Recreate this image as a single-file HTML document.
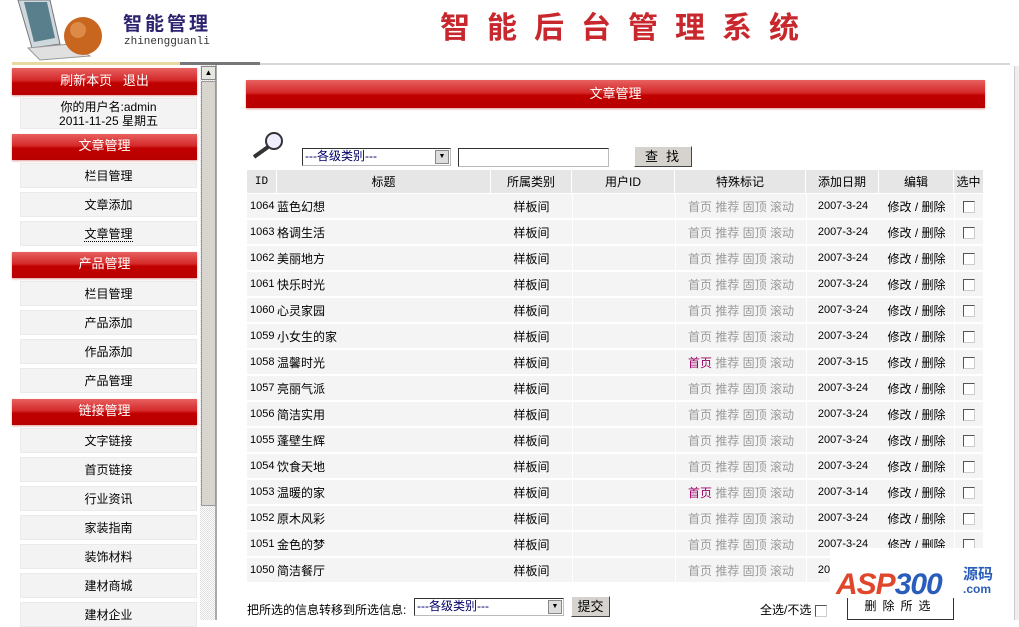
<!DOCTYPE html>
<html><head><meta charset="utf-8"><style>
*{margin:0;padding:0;box-sizing:border-box}
body{width:1019px;height:620px;overflow:hidden;background:#fff;font-family:"Liberation Sans","Noto Sans CJK SC","WenQuanYi Zen Hei",sans-serif;font-size:12px;color:#000;position:relative}
.a{position:absolute}
.red{background:linear-gradient(#e86060 0%,#d42a2a 45%,#c00000 55%,#b80000 100%);color:#fff;text-align:center;font-size:13px;box-shadow:0 1px 2px #d99}
.item{position:absolute;left:20px;width:177px;height:25px;background:#f3f3f3;border:1px solid #eaeaea;text-align:center;line-height:24px;font-size:12px}
table{border-collapse:separate;border-spacing:0 2px}
td{height:24px;background:#f4f4f4;font-size:12px;white-space:nowrap;padding:0}
th{height:23px;background:#e6e6e6;font-weight:normal;font-size:12px;border-right:1px solid #fff}
.g{color:#9a9a9a}
.cb{display:inline-block;width:12px;height:12px;border:1px solid #555;border-right-color:#ccc;border-bottom-color:#ccc;background:#fff;vertical-align:middle}
</style></head><body>
<!-- header -->
<svg class="a" style="left:10px;top:0" width="95" height="62">
<polygon points="8,0 40,0 50,44 22,48" fill="#cfd8dc" stroke="#777"/>
<polygon points="14,2 37,2 45,38 24,42" fill="#5a7f8c"/>
<polygon points="18,48 60,44 80,56 30,60" fill="#e0e0e0" stroke="#999"/>
<circle cx="73" cy="36" r="19" fill="#c8651f"/>
<circle cx="68" cy="30" r="8" fill="#e49a55" opacity=".7"/>
</svg>
<div class="a" style="left:123px;top:15px;font-size:19px;line-height:1;font-weight:bold;color:#2b2270;letter-spacing:3px">智能管理</div>
<div class="a" style="left:124px;top:37px;font-family:'Liberation Mono',monospace;font-size:11px;line-height:1;color:#333">zhinengguanli</div>
<div class="a" style="left:440px;top:12px;font-size:30px;line-height:1.1;font-weight:bold;color:#c8282d;letter-spacing:17px">智能后台管理系统</div>
<div class="a" style="left:12px;top:62px;width:168px;height:3px;background:#e8d9a0"></div>
<div class="a" style="left:180px;top:62px;width:80px;height:3px;background:#777"></div>
<div class="a" style="left:260px;top:63px;width:750px;height:2px;background:#d8d8d8"></div>
<div class="a" style="left:1014px;top:66px;width:5px;height:554px;background:#eee;border-left:1px solid #ccc"></div>
<!-- left scrollbar -->
<div class="a" style="left:200px;top:65px;width:17px;height:555px;background:repeating-conic-gradient(#ddd 0 25%,#fff 0 50%) 0 0/2px 2px;border-right:2px solid #aaa"></div>
<div class="a" style="left:201px;top:66px;width:15px;height:14px;background:#e8e6e0;border:1px solid #888;font-size:8px;text-align:center;line-height:12px">▲</div>
<div class="a" style="left:201px;top:81px;width:15px;height:425px;background:#d8d5ce;border:1px solid #999"></div>
<!-- left menu -->
<div class="a red" style="left:12px;top:68px;width:185px;height:27px;line-height:25px">刷新本页&nbsp;&nbsp;&nbsp;退出</div>
<div class="item" style="top:98px;height:31px;line-height:14px;padding-top:1px">你的用户名:admin<br>2011-11-25 星期五</div>
<div class="a red" style="left:12px;top:134px;width:185px;height:26px;line-height:24px">文章管理</div>
<div class="item" style="top:163px">栏目管理</div>
<div class="item" style="top:192px">文章添加</div>
<div class="item" style="top:221px"><span style="border-bottom:1px dotted #000">文章管理</span></div>
<div class="a red" style="left:12px;top:252px;width:185px;height:26px;line-height:24px">产品管理</div>
<div class="item" style="top:281px">栏目管理</div>
<div class="item" style="top:310px">产品添加</div>
<div class="item" style="top:339px">作品添加</div>
<div class="item" style="top:368px">产品管理</div>
<div class="a red" style="left:12px;top:399px;width:185px;height:26px;line-height:24px">链接管理</div>
<div class="item" style="top:428px">文字链接</div>
<div class="item" style="top:457px">首页链接</div>
<div class="item" style="top:486px">行业资讯</div>
<div class="item" style="top:515px">家装指南</div>
<div class="item" style="top:544px">装饰材料</div>
<div class="item" style="top:573px">建材商城</div>
<div class="item" style="top:602px">建材企业</div>
<!-- right -->
<div class="a red" style="left:246px;top:80px;width:739px;height:28px;line-height:28px">文章管理</div>
<svg class="a" style="left:250px;top:130px" width="38" height="30"><circle cx="24" cy="11" r="8" fill="#eef" stroke="#333" stroke-width="2"/><line x1="18" y1="17" x2="4" y2="27" stroke="#333" stroke-width="4"/></svg>
<div class="a" style="left:302px;top:148px;width:149px;height:18px;border:1px solid #333;border-right-color:#bbb;border-bottom-color:#bbb;background:#fff;font-size:12px;color:#000066;line-height:15px;padding-left:2px">---各级类别---<span class="a" style="right:1px;top:1px;width:14px;height:14px;background:#ddd;border:1px solid #888;font-size:7px;text-align:center;line-height:12px;color:#000">▼</span></div>
<div class="a" style="left:458px;top:148px;width:151px;height:19px;border:1px solid #333;border-right-color:#bbb;border-bottom-color:#bbb;background:#fff"></div>
<div class="a" style="left:634px;top:146px;width:58px;height:21px;background:#d6d3ce;border:1px solid #444;border-top-color:#fff;border-left-color:#fff;text-align:center;line-height:19px;font-size:13px;letter-spacing:8px;padding-left:6px">查找</div>
<table class="a" style="left:247px;top:168px;width:736px">
<tr><th style="width:30px;font-family:'Liberation Mono',monospace;font-size:11px">ID</th><th style="width:214px">标题</th><th style="width:81px">所属类别</th><th style="width:103px">用户ID</th><th style="width:131px">特殊标记</th><th style="width:73px">添加日期</th><th style="width:75px">编辑</th><th style="border:0">选中</th></tr>
</table>
<table class="a" style="left:247px;top:192px;width:736px" id="t"></table>
<div class="a" style="left:830px;top:548px;width:170px;height:53px;background:#fff"></div>
<div class="a" style="left:836px;top:568px;font-size:30px;font-weight:bold;font-style:italic;color:#e0462a;letter-spacing:-1px">ASP<span style="color:#2a5dbb">300</span></div>
<div class="a" style="left:963px;top:568px;font-size:15px;font-weight:bold;color:#2a5dbb;line-height:14px">源码<br><span style="font-size:12px">.com</span></div>
<div class="a" style="left:247px;top:601px;font-size:12px">把所选的信息转移到所选信息:</div>
<div class="a" style="left:414px;top:598px;width:150px;height:18px;border:1px solid #333;border-right-color:#bbb;border-bottom-color:#bbb;background:#fff;color:#000066;line-height:15px;padding-left:2px">---各级类别---<span class="a" style="right:1px;top:1px;width:14px;height:14px;background:#ddd;border:1px solid #888;font-size:7px;text-align:center;line-height:12px;color:#000">▼</span></div>
<div class="a" style="left:571px;top:596px;width:39px;height:21px;background:#d6d3ce;border:1px solid #444;border-top-color:#fff;border-left-color:#fff;text-align:center;line-height:19px;font-size:13px">提交</div>
<div class="a" style="left:760px;top:601px">全选/不选 <span class="cb"></span></div>
<div class="a" style="left:847px;top:598px;width:107px;height:22px;border:1px solid #333;border-top:0;background:#fff;text-align:center;letter-spacing:6px;font-size:12px;line-height:16px">删除所选</div>
<script>
var d=[["1064","蓝色幻想","2007-3-24"],["1063","格调生活","2007-3-24"],["1062","美丽地方","2007-3-24"],["1061","快乐时光","2007-3-24"],["1060","心灵家园","2007-3-24"],["1059","小女生的家","2007-3-24"],["1058","温馨时光","2007-3-15",1],["1057","亮丽气派","2007-3-24"],["1056","简洁实用","2007-3-24"],["1055","蓬壁生辉","2007-3-24"],["1054","饮食天地","2007-3-24"],["1053","温暖的家","2007-3-14",1],["1052","原木风彩","2007-3-24"],["1051","金色的梦","2007-3-24"],["1050","简洁餐厅","2007-3-24"]];
var h="";d.forEach(function(r){h+='<tr><td style="width:30px;padding-left:3px;font-size:11px">'+r[0]+'</td><td style="width:214px">'+r[1]+'</td><td style="width:81px;text-align:center">样板间</td><td style="width:103px;border-left:1px solid #fff"></td><td style="width:131px;text-align:center;border-left:1px solid #fff" class="g"><span style="color:'+(r[3]?'#990066':'#9a9a9a')+'">首页</span> 推荐 固顶 滚动</td><td style="width:73px;text-align:center;font-size:11px;border-left:1px solid #fff">'+r[2]+'</td><td style="width:75px;text-align:center">修改 / 删除</td><td style="text-align:center;border-left:1px solid #fff"><span class="cb"></span></td></tr>'});
document.getElementById("t").innerHTML=h;
</script>
</body></html>
